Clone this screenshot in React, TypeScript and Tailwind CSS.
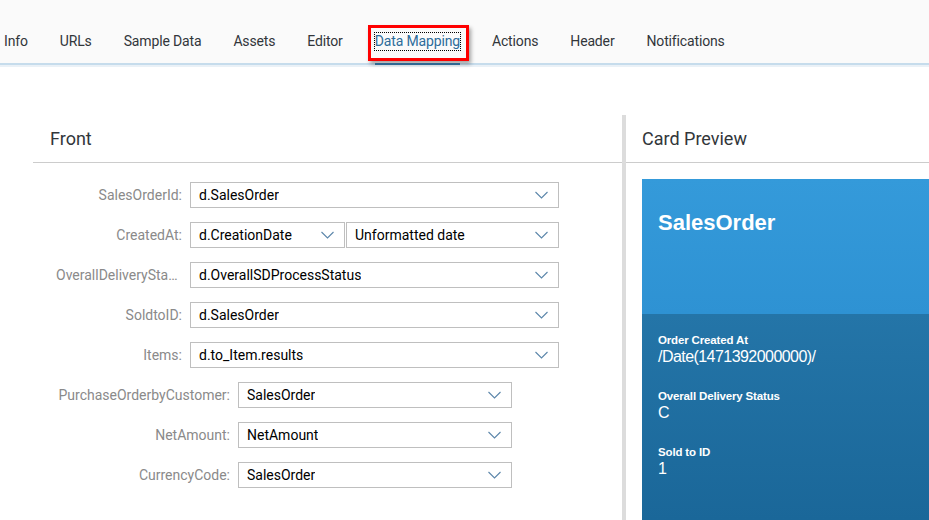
const TABS = ["Info", "URLs", "Sample Data", "Assets", "Editor", "Data Mapping", "Actions", "Header", "Notifications"];

const Chevron = () => (
	<svg width="13" height="8" viewBox="0 0 13 8" className="shrink-0">
		<polyline points="0.5,1 6.5,7 12.5,1" fill="none" stroke="#5b86aa" strokeWidth="1.1" />
	</svg>
);

interface SelectProps {
	value: string;
	width: string;
}

const Select = ({ value, width }: SelectProps) => (
	<div className={`${width} h-[26px] border border-[#bfbfbf] bg-white flex items-center justify-between pl-[8px] pr-[10px] text-[14px] text-[#000000]`}>
		<span className="truncate">{value}</span>
		<Chevron />
	</div>
);

interface FieldProps {
	label: string;
	labelWidth: string;
	children: React.ReactNode;
}

const Field = ({ label, labelWidth, children }: FieldProps) => (
	<div className="flex items-center h-[26px]">
		<div className={`${labelWidth} shrink-0 pr-[8px] text-right truncate text-[14px] text-[#8a8a8a]`}>{label}</div>
		{children}
	</div>
);

const CardField = ({ label, value }: { label: string; value: string }) => (
	<div className="flex flex-col">
		<span className="text-[11.5px] font-bold leading-[14px] tracking-[-0.15px]">{label}</span>
		<span className="text-[16px] leading-[20px] tracking-[-0.55px]">{value}</span>
	</div>
);

const App = () => {
	return (
		<div className="w-[929px] h-[520px] overflow-hidden bg-white font-['Roboto',sans-serif]">
			<div className="h-[63px] bg-[#fafafa] flex pl-[4px] gap-[32px] tracking-[-0.15px]">
				{TABS.map((tab) =>
					tab === "Data Mapping" ? (
						<div key={tab} className="relative h-full flex items-center pt-[20px]">
							<span className="text-[14px] leading-[17px] text-[#2d6c9b] outline-1 outline-dotted outline-black">{tab}</span>
							<div className="absolute left-[-7px] right-[-9px] top-[25px] h-[36px] border-[3px] border-[#ff0000] shadow-[2px_3px_4px_rgba(0,0,0,0.35)]" />
							<div className="absolute left-0 right-0 -bottom-[2px] h-[2px] bg-[#2f6792]" />
						</div>
					) : (
						<div key={tab} className="h-full flex items-center pt-[20px] text-[14px] text-[#32363a]">
							{tab}
						</div>
					)
				)}
			</div>
			<div className="h-[2px] bg-[#c6dcec]" />
			<div className="h-[2px] bg-[#eaf1f7]" />

			<div className="flex mt-[48px] h-[405px]">
				<div className="w-[33px]" />
				<div className="w-[589px] flex flex-col">
					<div className="h-[48px] border-b border-[#cccccc] flex items-center pl-[17px] text-[18px] text-[#32363a]">Front</div>
					<div className="flex flex-col gap-[14px] pt-[19px] pl-[23px]">
						<Field label="SalesOrderId:" labelWidth="w-[134px]">
							<Select value="d.SalesOrder" width="w-[369px]" />
						</Field>
						<Field label="CreatedAt:" labelWidth="w-[134px]">
							<div className="flex gap-[1px]">
								<Select value="d.CreationDate" width="w-[155px]" />
								<Select value="Unformatted date" width="w-[213px]" />
							</div>
						</Field>
						<Field label="OverallDeliveryStatus:" labelWidth="w-[134px]">
							<Select value="d.OverallSDProcessStatus" width="w-[369px]" />
						</Field>
						<Field label="SoldtoID:" labelWidth="w-[134px]">
							<Select value="d.SalesOrder" width="w-[369px]" />
						</Field>
						<Field label="Items:" labelWidth="w-[134px]">
							<Select value="d.to_Item.results" width="w-[369px]" />
						</Field>
						<Field label="PurchaseOrderbyCustomer:" labelWidth="w-[182px]">
							<Select value="SalesOrder" width="w-[274px]" />
						</Field>
						<Field label="NetAmount:" labelWidth="w-[182px]">
							<Select value="NetAmount" width="w-[274px]" />
						</Field>
						<Field label="CurrencyCode:" labelWidth="w-[182px]">
							<Select value="SalesOrder" width="w-[274px]" />
						</Field>
					</div>
				</div>
				<div className="w-[4px] bg-[#dcdcdc]" />
				<div className="flex-1 flex flex-col">
					<div className="h-[48px] border-b border-[#cccccc] flex items-center pl-[16px] text-[18px] text-[#32363a]">Card Preview</div>
					<div className="flex-1 pl-[16px] pt-[16px]">
						<div className="h-full flex flex-col text-white font-['Liberation_Sans',Arial,sans-serif]">
							<div className="h-[135px] bg-gradient-to-b from-[#349ada] to-[#2e92d3] pl-[16px] pt-[31px]">
								<div className="text-[22px] font-bold leading-[26px]">SalesOrder</div>
							</div>
							<div className="flex-1 bg-gradient-to-b from-[#2475a8] to-[#1a6799] pl-[16px] pt-[19px] flex flex-col gap-[22px]">
								<CardField label="Order Created At" value="/Date(1471392000000)/" />
								<CardField label="Overall Delivery Status" value="C" />
								<CardField label="Sold to ID" value="1" />
							</div>
						</div>
					</div>
				</div>
			</div>
		</div>
	);
};

export default App;
